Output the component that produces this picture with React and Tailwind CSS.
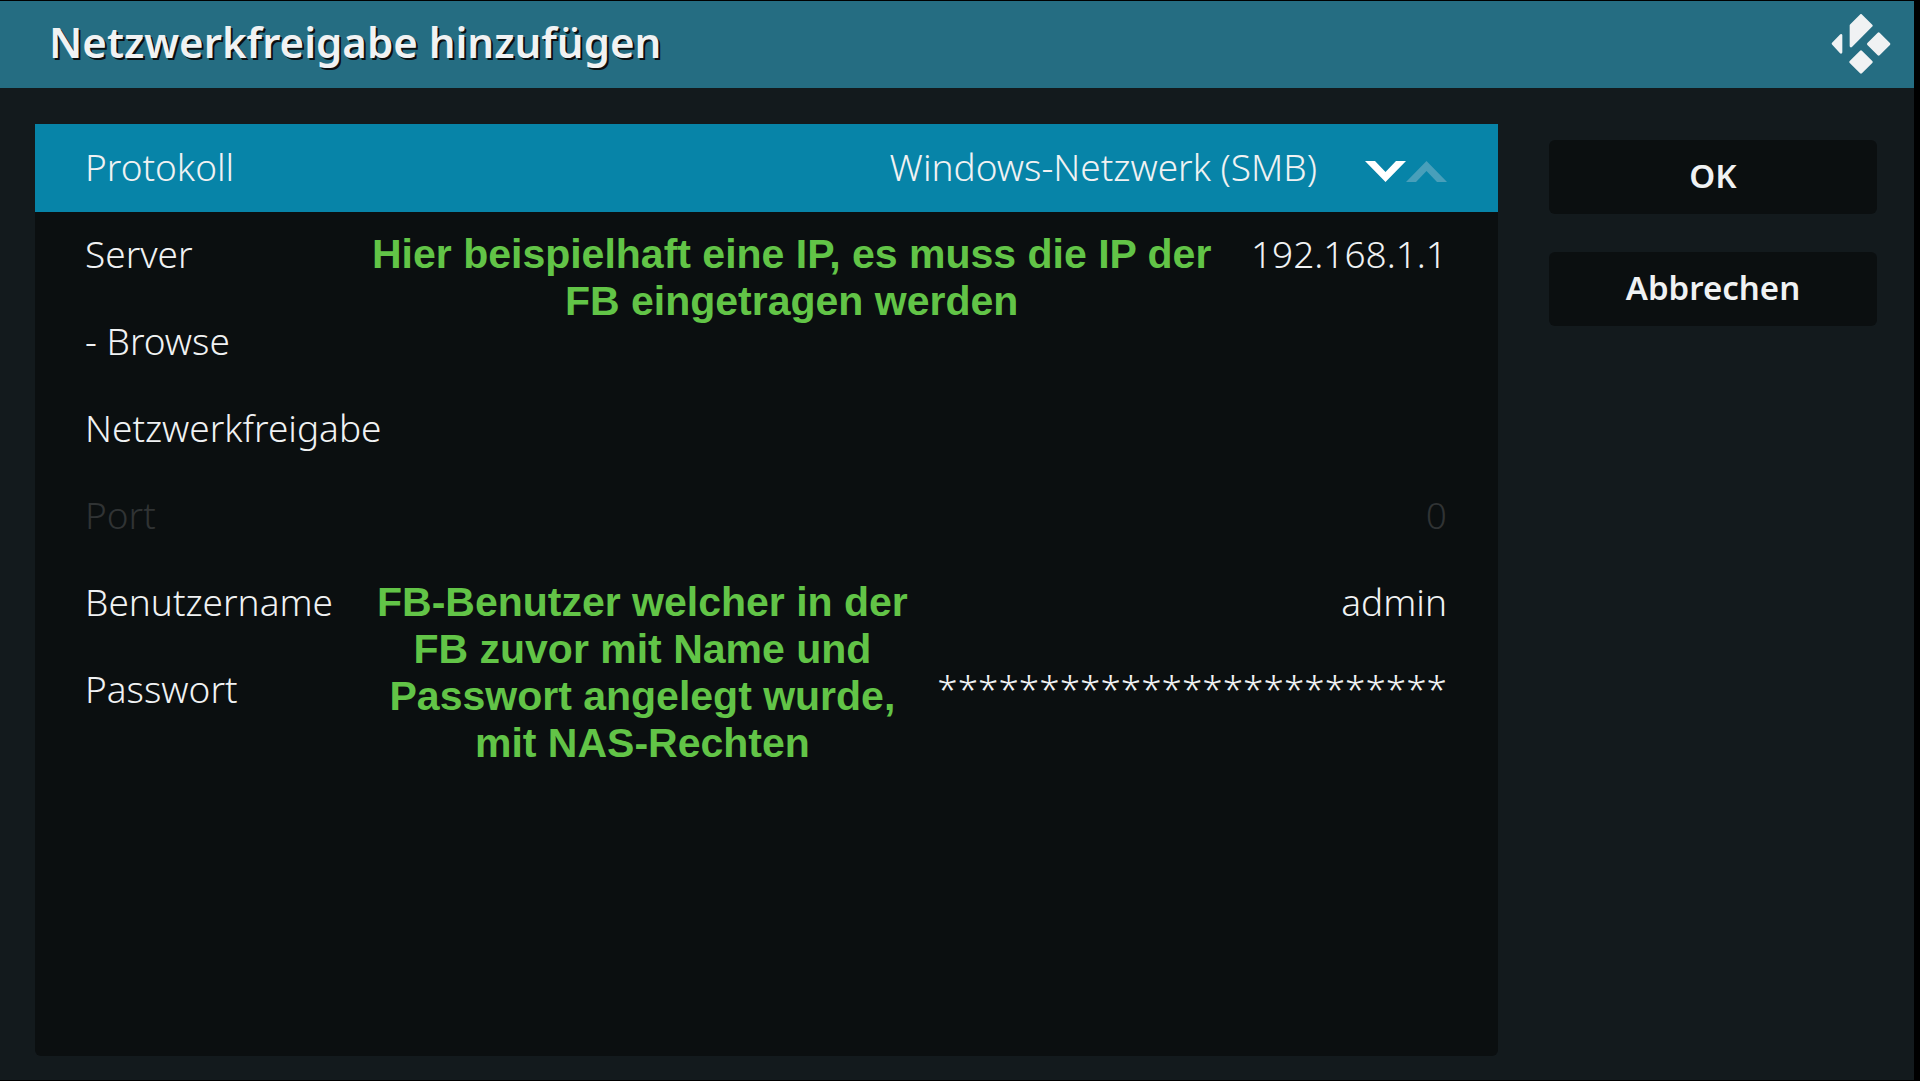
/**
 * Add Network Share Dialog
 * Protocol, server and login settings for a new network location
 */

import { useState } from 'react'

const PROTOCOLS = ['Windows-Netzwerk (SMB)', 'Netzwerk-Dateisystem (NFS)']

function KodiLogo() {
  return (
    <svg
      className="w-[60px] h-[60px]"
      viewBox="156 42 178 180"
      fill="currentColor"
      stroke="currentColor"
      strokeWidth="8"
      strokeLinejoin="round"
      aria-hidden="true"
    >
      <path d="M245 46L276 77L215 138V76Z" />
      <path d="M161 131L185 106V157Z" />
      <path d="M298 101L329 132L298 163L267 132Z" />
      <path d="M245 155L276 186L245 217L214 186Z" />
    </svg>
  )
}

function Note({ lines, className }) {
  return (
    <p className={`absolute top-[19px] z-10 text-center whitespace-nowrap font-['Liberation_Sans',sans-serif] font-bold text-[41px] leading-[47px] text-[#62c447] pointer-events-none ${className}`}>
      {lines.map((line) => (
        <span key={line} className="block">{line}</span>
      ))}
    </p>
  )
}

function Field({ label, name, value, onChange, disabled, children }) {
  return (
    <div className={`relative flex items-center h-[87px] pb-1 pl-[50px] pr-[51px] ${disabled ? 'text-[#303334]' : ''}`}>
      <label htmlFor={name} className="shrink-0">{label}</label>
      <input
        id={name}
        name={name}
        type="text"
        value={value}
        onChange={onChange}
        disabled={disabled}
        autoComplete="off"
        className="flex-1 min-w-0 ml-8 bg-transparent text-right outline-none"
      />
      {children}
    </div>
  )
}

export default function App() {
  const [formData, setFormData] = useState({
    protocol: PROTOCOLS[0],
    server: '192.168.1.1',
    share: '',
    port: '0',
    username: 'admin',
    password: '*************************',
  })

  const handleChange = (e) => {
    setFormData({
      ...formData,
      [e.target.name]: e.target.value,
    })
  }

  const stepProtocol = (step) => {
    const index = PROTOCOLS.indexOf(formData.protocol) + step
    if (PROTOCOLS[index]) {
      setFormData({ ...formData, protocol: PROTOCOLS[index] })
    }
  }

  return (
    <div className="min-h-screen flex flex-col bg-black pt-px pb-px pr-[6px] font-['Noto_Sans',sans-serif] text-[#f0f2f3]">
      {/* Header */}
      <header className="flex items-center justify-between h-[87px] pb-[2px] pl-[49px] pr-[23px] bg-[#256d82]">
        <h1 className="pb-1 text-[42px] leading-[56px] font-semibold [text-shadow:2px_2px_0_#0b0f10]">
          Netzwerkfreigabe hinzufügen
        </h1>
        <KodiLogo />
      </header>

      <form
        onSubmit={(e) => e.preventDefault()}
        className="flex-1 flex gap-[51px] pl-[35px] pr-[37px] pt-9 pb-6 bg-[#131a1d]"
      >
        {/* Settings */}
        <div className="flex-1 min-w-0 rounded-b-md bg-[#0b0f10] text-[37px] leading-[48px] font-light">
          <div className="flex items-center h-[88px] pb-[2px] pl-[50px] pr-[51px] bg-[#0784a8]">
            <label htmlFor="protocol">Protokoll</label>
            <select
              id="protocol"
              name="protocol"
              value={formData.protocol}
              onChange={handleChange}
              className="ml-auto mr-12 appearance-none bg-transparent outline-none field-sizing-content text-right"
            >
              {PROTOCOLS.map((protocol) => (
                <option key={protocol} className="bg-[#0b0f10]">{protocol}</option>
              ))}
            </select>
            <div className="flex pt-2">
              <button type="button" aria-label="Nächstes Protokoll" onClick={() => stepProtocol(1)}>
                <svg className="w-[41px] h-[21px]" viewBox="0 0 41 21" fill="#ffffff">
                  <path d="M0 0H10L20.5 11L31 0H41L20.5 21Z" />
                </svg>
              </button>
              <button type="button" aria-label="Vorheriges Protokoll" onClick={() => stepProtocol(-1)}>
                <svg className="w-[41px] h-[21px]" viewBox="0 0 41 21" fill="#489fba">
                  <path d="M0 21H10L20.5 10L31 21H41L20.5 0Z" />
                </svg>
              </button>
            </div>
          </div>

          <Field label="Server" name="server" value={formData.server} onChange={handleChange}>
            <Note
              className="left-[337px]"
              lines={['Hier beispielhaft eine IP, es muss die IP der', 'FB eingetragen werden']}
            />
          </Field>
          <button type="button" className="flex items-center w-full h-[87px] pb-1 px-[50px] text-left">
            - Browse
          </button>
          <Field label="Netzwerkfreigabe" name="share" value={formData.share} onChange={handleChange} />
          <Field label="Port" name="port" value={formData.port} onChange={handleChange} disabled />
          <Field label="Benutzername" name="username" value={formData.username} onChange={handleChange}>
            <Note
              className="left-[342px]"
              lines={[
                'FB-Benutzer welcher in der',
                'FB zuvor mit Name und',
                'Passwort angelegt wurde,',
                'mit NAS-Rechten',
              ]}
            />
          </Field>
          <Field label="Passwort" name="password" value={formData.password} onChange={handleChange} />
        </div>

        {/* Actions */}
        <div className="flex flex-col gap-[38px] w-[328px] pt-4 text-[33px] leading-[44px] font-semibold">
          <button type="submit" className="h-[74px] pb-[2px] rounded-md bg-[#0b0f10]">OK</button>
          <button type="button" className="h-[74px] pb-[2px] rounded-md bg-[#0b0f10]">Abbrechen</button>
        </div>
      </form>
    </div>
  )
}
